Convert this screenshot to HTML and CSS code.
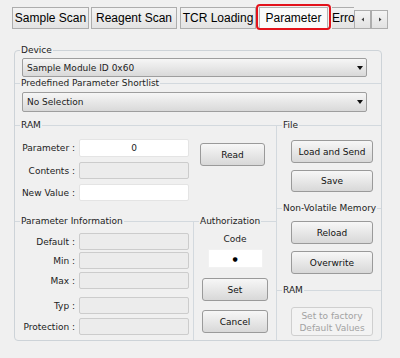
FILE: index.html
```html
<!DOCTYPE html>
<html>
<head>
<meta charset="utf-8">
<link rel="stylesheet" href="styles.css">
</head>
<body>
<div class="tabbar">
  <div class="tabs">
    <div class="tab t1">Sample Scan</div>
    <div class="tab t2">Reagent Scan</div>
    <div class="tab t3">TCR Loading</div>
    <div class="hl"><div class="tab active">Parameter</div></div>
    <div class="tab t5">Error</div>
  </div>
  <div class="scroll">
    <span class="sb"><svg width="4" height="5" viewBox="0 0 4 5"><path d="M3 0.5 L0.5 2.5 L3 4.5Z" fill="#444"/></svg></span>
    <span class="sb"><svg width="4" height="5" viewBox="0 0 4 5"><path d="M1 0.5 L3.5 2.5 L1 4.5Z" fill="#444"/></svg></span>
  </div>
</div>
<div class="panel">
  <div class="legend">Device</div>
  <div class="select s1"><span>Sample Module ID 0x60</span><i class="arrow"></i></div>
  <div class="group shortlist">
    <div class="legend">Predefined Parameter Shortlist</div>
    <div class="select s2"><span>No Selection</span><i class="arrow"></i></div>
  </div>
  <div class="lower">
    <div class="leftcol">
      <div class="group ram">
        <div class="legend">RAM</div>
        <div class="ramgrid">
          <div class="lbl">Parameter :</div>
          <div class="field white val">0</div>
          <div class="btn read">Read</div>
          <div class="lbl">Contents :</div>
          <div class="field"></div>
          <div class="lbl">New Value :</div>
          <div class="field white"></div>
        </div>
      </div>
      <div class="bottomrow">
        <div class="group info">
          <div class="legend">Parameter Information</div>
          <div class="row m6"><span class="lbl">Default :</span><span class="field"></span></div>
          <div class="row m2"><span class="lbl">Min :</span><span class="field"></span></div>
          <div class="row m3"><span class="lbl">Max :</span><span class="field"></span></div>
          <div class="row m8"><span class="lbl">Typ :</span><span class="field"></span></div>
          <div class="row m4"><span class="lbl">Protection :</span><span class="field"></span></div>
        </div>
        <div class="group auth">
          <div class="legend">Authorization</div>
          <div class="code-lbl">Code</div>
          <div class="code">●</div>
          <div class="btn set">Set</div>
          <div class="btn cancel">Cancel</div>
        </div>
      </div>
    </div>
    <div class="rightcol">
      <div class="group file">
        <div class="legend">File</div>
        <div class="btn rb lns">Load and Send</div>
        <div class="btn rb save">Save</div>
      </div>
      <div class="group nvm">
        <div class="legend">Non-Volatile Memory</div>
        <div class="btn rb reload">Reload</div>
        <div class="btn rb overwrite">Overwrite</div>
      </div>
      <div class="group ram2">
        <div class="legend">RAM</div>
        <div class="btn rb factory">Set to factory<br>Default Values</div>
      </div>
    </div>
  </div>
</div>
</body>
</html>
```

FILE: styles.css
```css
* { box-sizing: border-box; }
html, body { margin: 0; padding: 0; background: #f0f0f0; }
body {
  width: 400px; height: 358px; overflow: hidden;
  font-family: "DejaVu Sans", sans-serif; font-size: 9px; color: #1c1c1c;
}

/* tabs */
.tabbar {
  display: flex; align-items: flex-start; height: 30px;
  padding: 4px 0 0 12px;
  font-family: "Liberation Sans", Arial, sans-serif; font-size: 12px;
}
.tabs { display: flex; align-items: flex-start; width: 342px; flex: none; overflow: hidden; }
.tab {
  flex: none; height: 22px; margin-top: 3px; line-height: 20px;
  text-align: center; white-space: nowrap; color: #000;
  border: 1px solid #adadad;
  background: linear-gradient(#f3f3f3, #e3e3e3);
}
.t1 { width: 77px; margin-right: 2px; }
.t2 { width: 86px; margin-right: 3px; }
.t3 { width: 76px; }
.hl {
  flex: none; border: 2px solid #e3121b; border-radius: 4px;
  padding: 1px 1px 0 1px; margin-right: 1px;
}
.tab.active {
  width: 69px; height: 21px; margin-top: 0;
  background: #fafafa; border-color: #b4b4b4; border-bottom: none;
}
.t5 { width: 40px; text-align: left; border-left: none; padding-left: 0; }
.scroll { display: flex; margin-top: 6px; }
.sb {
  width: 17px; height: 19px; display: flex; align-items: center; justify-content: center;
  border: 1px solid #adadad; background: linear-gradient(#f4f4f4, #e2e2e2);
}

/* panel */
.panel {
  margin: 20px 0 0 14px; width: 368px; height: 291px;
  border: 1px solid #cdd3d8; border-radius: 4px;
  display: flex; flex-direction: column;
}
.legend {
  width: max-content; height: 12px; line-height: 12px;
  margin: -7px 0 0 5px; padding: 0 1px;
  background: #f0f0f0; color: #222; white-space: nowrap;
}
.group { border-top: 1px solid #d3d9de; }

.select {
  display: flex; align-items: center; justify-content: space-between;
  margin: 2px 0 0 7px; width: 345px; height: 19px;
  padding: 0 3px 0 4px;
  border: 1px solid #9e9e9e; border-radius: 2px;
  background: linear-gradient(#f6f6f6, #d9d9d9);
}
.s2 { margin-top: 3px; height: 20px; }
.arrow {
  width: 0; height: 0;
  border-left: 3.5px solid transparent; border-right: 3.5px solid transparent;
  border-top: 4px solid #111;
}
.shortlist { margin-top: 6px; }

.lower { display: flex; flex: 1; margin-top: 13px; }
.leftcol { width: 262px; display: flex; flex-direction: column; border-right: 1px solid #d3d9de; }
.ram { height: 96px; }
.bottomrow { display: flex; flex: 1; border-top: 1px solid #d3d9de; }
.bottomrow .group { border-top: none; }
.info { width: 179px; border-right: 1px solid #d3d9de; }
.auth { flex: 1; display: flex; flex-direction: column; align-items: center; }
.auth .legend { align-self: flex-start; }

.lbl { display: flex; align-items: center; justify-content: flex-end; width: 60px; white-space: nowrap; color: #222; }
.field {
  height: 17px; width: 110px;
  border: 1px solid #cccccc; border-radius: 2px; background: #ececec;
}
.field.white { background: #fff; border-color: #e4e4e4; }
.val { display: flex; align-items: center; justify-content: center; }

.ramgrid {
  display: grid; margin-top: 8px;
  grid-template-columns: 60px 110px 76px;
  grid-template-rows: 18px 17px 17px;
  column-gap: 4px; row-gap: 5px;
}
.ramgrid .field { height: auto; }
.read { grid-column: 3; grid-row: 1 / span 2; align-self: start; margin: 4px 0 0 7px; width: 65px; height: 23px; }

.row { display: flex; align-items: center; gap: 4px; height: 17px; }
.m6 { margin-top: 6px; }
.m2 { margin-top: 2px; }
.m3 { margin-top: 3px; }
.m8 { margin-top: 8px; }
.m4 { margin-top: 4px; }

.code-lbl { margin-top: 6px; height: 12px; line-height: 12px; color: #222; }
.code {
  margin-top: 4px; width: 55px; height: 19px;
  display: flex; align-items: center; justify-content: center;
  background: #fff; border: 1px solid #f2f2f2; font-size: 6px; color: #000;
}

.btn {
  display: flex; align-items: center; justify-content: center; text-align: center;
  border: 1px solid #9a9a9a; border-radius: 3px;
  background: linear-gradient(#f7f7f7, #d8d8d8); color: #111;
}
.set { margin-top: 10px; width: 66px; height: 23px; }
.cancel { margin-top: 9px; width: 66px; height: 23px; }

.rightcol { flex: 1; display: flex; flex-direction: column; }
.file { height: 83px; }
.nvm { height: 82px; }
.ram2 { flex: 1; }
.rb { margin-left: 14px; width: 82px; height: 23px; }
.lns { margin-top: 9px; }
.save { margin-top: 7px; height: 22px; }
.reload { margin-top: 7px; }
.overwrite { margin-top: 7px; }
.factory {
  margin-top: 11px; height: 29px; line-height: 12px;
  border-color: #cfcfcf; background: #f3f3f3; color: #a2a2a2;
}
```
